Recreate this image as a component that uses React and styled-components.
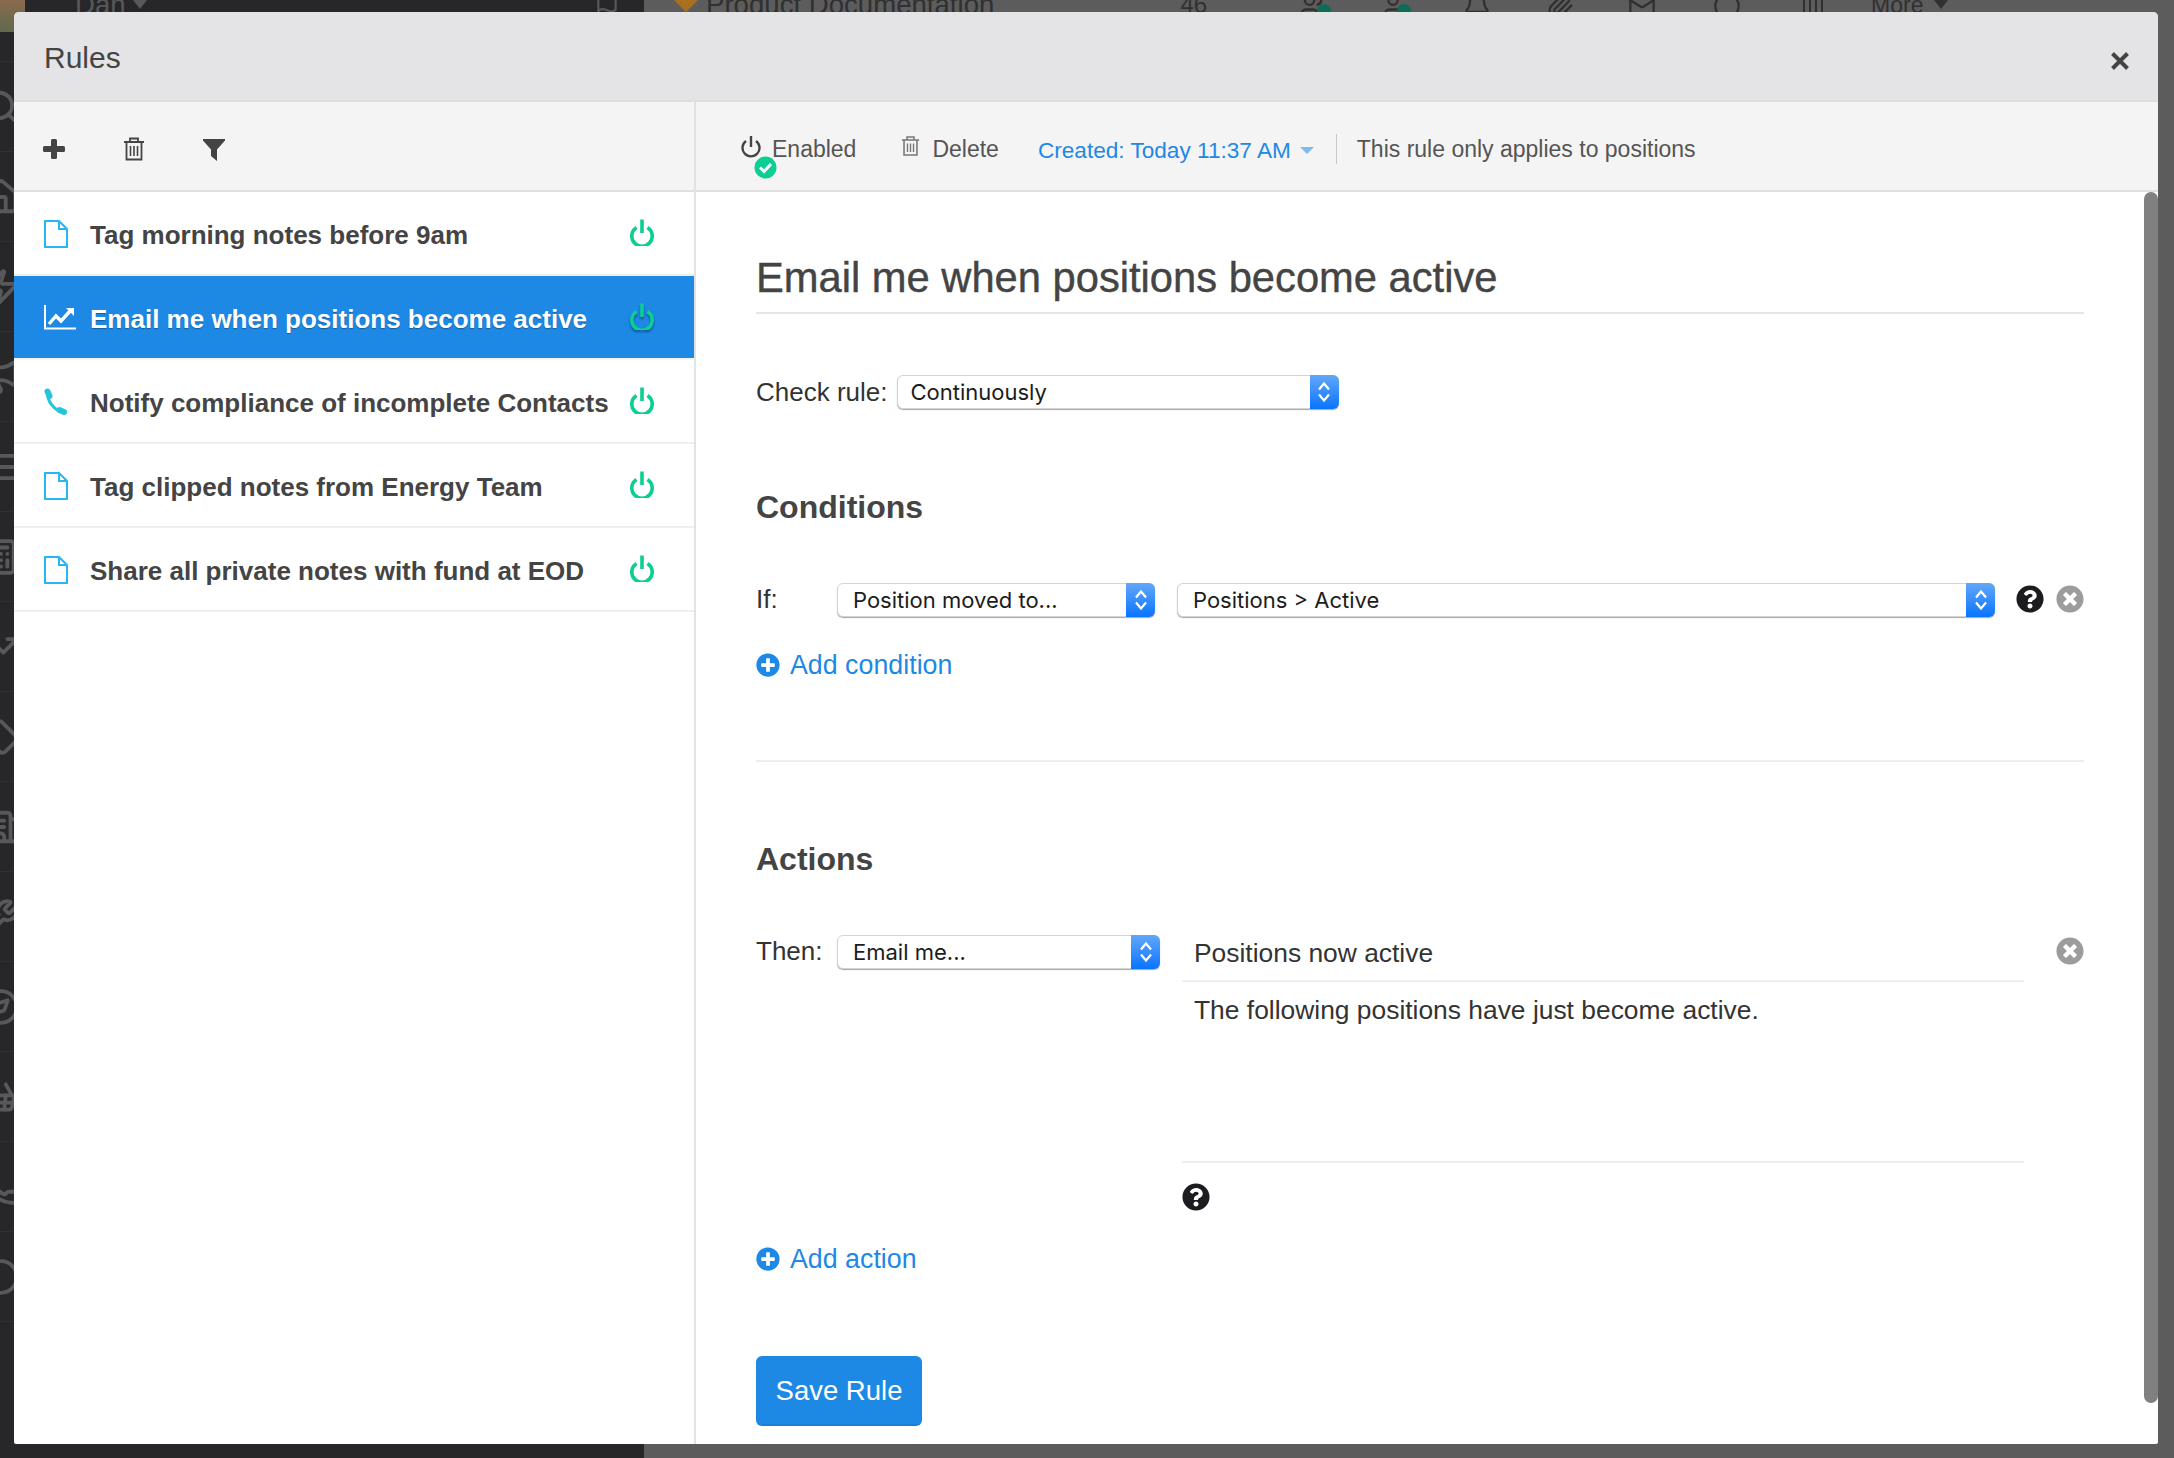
import React from 'react';
import styled, { createGlobalStyle } from 'styled-components';
import { FaQuestionCircle, FaTimesCircle, FaPlusCircle } from 'react-icons/fa';
import {
    Search, Home, Zap, Megaphone, List, Calculator, TrendingUp, Tag, Building2, Wrench,
    Compass, ShoppingBasket, Phone, Circle, Flag, Users, User, Bell, Paperclip, Mail,
    MessageCircle, Columns3,
} from 'lucide-react';

const BLUE = '#1e88e5';
const GREEN = '#0bcf92';
const SANS = '"Liberation Sans", Arial, sans-serif';

const GlobalStyle = createGlobalStyle`
    html, body {
        margin: 0;
        padding: 0;
        overflow: hidden;
        background: #5c5c5c;
    }
`;

const Page = styled.div`
    position: relative;
    display: flex;
    width: 2174px;
    height: 1458px;
    overflow: hidden;
    font-family: ${SANS};
`;

/* what shows around the dialog */
const Rail = styled.div`
    width: 644px;
    flex-shrink: 0;
    background: #27272a;
    color: #58585b;
`;

const RailHead = styled.div`
    height: 61px;
    border-bottom: 1px solid #303033;
`;

const Backdrop = styled.div`
    flex: 1;
    background: #5c5c5c;
    color: #303030;
`;

const TopBar = styled.div`
    display: flex;
    align-items: flex-end;
    height: 20px;
    padding-bottom: ${p => p.$pad || 0}px;
    overflow: hidden;
    font-size: 27.6px;
    line-height: 30px;
    white-space: nowrap;
`;

const Avatar = styled.div`
    width: 25px;
    height: 32px;
    flex-shrink: 0;
    align-self: flex-start;
    background: linear-gradient(#8b6a4f, #5f6a4c);
`;

const BarItem = styled.span`
    position: relative;
    display: inline-flex;
    align-items: flex-end;
    flex-shrink: 0;
    margin-left: ${p => p.$gap || 0}px;
    font-size: ${p => p.$size ? `${p.$size}px` : 'inherit'};
`;

const StatusDot = styled.span`
    position: absolute;
    right: -4px;
    bottom: 2px;
    width: 14px;
    height: 14px;
    border-radius: 50%;
    background: #0e6b55;
`;

const BarCaret = styled.span`
    flex-shrink: 0;
    align-self: flex-start;
    margin-left: ${p => p.$gap || 0}px;
    border-left: 7px solid transparent;
    border-right: 7px solid transparent;
    border-top: 9px solid currentColor;
`;

const Gem = styled.span`
    flex-shrink: 0;
    align-self: flex-start;
    width: 24px;
    height: 12px;
    margin-left: 30px;
    background: #a8701f;
    clip-path: polygon(0 0, 100% 0, 50% 100%);
`;

const RailItem = styled.div`
    display: flex;
    align-items: center;
    justify-content: flex-start;
    height: 89px;
    width: 644px;
    border-bottom: 1px solid #303033;
    overflow: hidden;

    & > svg {
        margin-left: -18px;
        flex-shrink: 0;
    }
`;

/* dialog */
const Modal = styled.div`
    position: absolute;
    top: 12px;
    left: 14px;
    width: 2144px;
    height: 1432px;
    display: flex;
    flex-direction: column;
    background: #fff;
    border-radius: 5px 5px 2px 2px;
    overflow: hidden;
    color: #333;
`;

const ModalHeader = styled.div`
    display: flex;
    align-items: center;
    justify-content: space-between;
    height: 88px;
    flex-shrink: 0;
    padding: 0 29px 0 30px;
    background: #e4e4e6;
    border-bottom: 2px solid #dedee0;
`;

const ModalTitle = styled.div`
    font-size: 30px;
    color: #444;
    margin-top: 4px;
`;

const CloseIcon = styled.svg`
    width: 18px;
    height: 18px;
    margin-top: 10px;
`;

const ModalBody = styled.div`
    flex: 1;
    display: flex;
    min-height: 0;
`;

const ListPane = styled.div`
    width: 680px;
    flex-shrink: 0;
    border-right: 2px solid #e2e2e2;
    box-sizing: content-box;
`;

const RulePane = styled.div`
    position: relative;
    flex: 1;
    min-width: 0;
`;

const Toolbar = styled.div`
    display: flex;
    align-items: center;
    height: 82px;
    padding-top: 6px;
    background: #f4f4f4;
    border-bottom: 2px solid #e0e0e0;
`;

const ListToolbar = styled(Toolbar)`
    padding-left: 29px;
    gap: 58px;
`;

const RuleToolbar = styled(Toolbar)`
    padding-left: 45px;
    font-size: 23px;
    color: #555;
`;

const ToolIcon = styled.svg`
    width: 22px;
    height: 24px;
    color: #444;
`;

const ToolAction = styled.div`
    position: relative;
    display: flex;
    align-items: center;
    margin-right: ${p => p.$gap}px;
    gap: ${p => p.$iconGap}px;

    & > svg {
        margin-top: -6px;
    }
`;

const CheckBadge = styled.svg`
    position: absolute;
    left: 13px;
    top: 26px;
    width: 23px;
    height: 23px;
`;

const CreatedMenu = styled.div`
    display: flex;
    align-items: center;
    gap: 9px;
    padding-top: 4px;
    font-size: 22.6px;
    color: ${BLUE};
`;

const Caret = styled.span`
    border-left: 7px solid transparent;
    border-right: 7px solid transparent;
    border-top: 7px solid #7dbaf0;
    margin-top: -2px;
`;

const ToolDivider = styled.div`
    width: 1px;
    height: 30px;
    margin: 0 20px 0 22px;
    background: #c8c8c8;
`;

const RuleRow = styled.div`
    display: flex;
    align-items: center;
    height: 78px;
    padding: 4px 40px 0 30px;
    border-bottom: 2px solid ${p => p.$active ? '#f4f4f4' : '#eeeeee'};
    background: ${p => p.$active ? BLUE : '#fff'};
    color: ${p => p.$active ? '#fff' : '#444'};
    font-size: 26px;
    font-weight: bold;
    white-space: nowrap;
    text-shadow: ${p => p.$active ? '0 1px 1px rgba(0,0,0,.3)' : 'none'};
`;

const RuleIconBox = styled.div`
    width: 46px;
    flex-shrink: 0;
    display: flex;
    align-items: center;
    margin-top: -3px;
`;

const RuleName = styled.div`
    flex: 1;
`;

const PowerIcon = styled.svg`
    width: 24px;
    height: 27px;
    flex-shrink: 0;
    margin-top: -6px;
    filter: ${p => p.$active ? 'drop-shadow(0 2px 1px rgba(0,40,90,.55))' : 'none'};
`;

const Editor = styled.div`
    padding: 0 74px 0 60px;
`;

const RuleTitle = styled.h1`
    margin: 62px 0 0;
    padding-bottom: 10px;
    font-size: 41.7px;
    line-height: 48px;
    font-weight: normal;
    color: #444;
    border-bottom: 2px solid #e5e5e5;
    -webkit-text-stroke: 0.4px #444;
`;

const CheckRow = styled.div`
    display: flex;
    align-items: center;
    gap: 9px;
    margin-top: 61px;
`;

const FieldLabel = styled.div`
    font-size: 26px;
    color: #333;
    white-space: nowrap;
    width: ${p => p.$width ? `${p.$width}px` : 'auto'};
    flex-shrink: 0;
    padding-bottom: ${p => p.$lift || 0}px;
`;

const SectionTitle = styled.h2`
    margin: ${p => p.$top}px 0 0;
    font-size: 32px;
    line-height: 40px;
    color: #444;
`;

const SelectBox = styled.div`
    position: relative;
    display: flex;
    align-items: center;
    box-sizing: border-box;
    width: ${p => p.$width}px;
    height: 34px;
    flex-shrink: 0;
    padding-left: ${p => p.$pad}px;
    background: #fff;
    border: 1px solid #d4d4d4;
    border-radius: 6px;
    box-shadow: 0 1px 1px rgba(0, 0, 0, .35);
    font-family: Inter, ${SANS};
    font-size: 22px;
    color: #1c1c1c;
`;

const SelectArrows = styled.div`
    position: absolute;
    top: -1px;
    right: -1px;
    bottom: -1px;
    width: 29px;
    display: flex;
    align-items: center;
    justify-content: center;
    background: linear-gradient(#62a8f8, #0a74ff);
    border-radius: 0 6px 6px 0;
`;

const FormRow = styled.div`
    display: flex;
    align-items: center;
    margin-top: 56px;
    height: 34px;
`;

const HelpIcon = styled(FaQuestionCircle)`
    width: 28px;
    height: 28px;
    color: #1c1c20;
    flex-shrink: 0;
`;

const RemoveIcon = styled(FaTimesCircle)`
    width: 28px;
    height: 28px;
    color: #9c9c9c;
    flex-shrink: 0;
`;

const RowIcons = styled.div`
    display: flex;
    gap: 12px;
    margin: -3px 0 0 21px;
`;

const AddLink = styled.div`
    display: flex;
    align-items: center;
    gap: 10px;
    height: 24px;
    margin-top: 36px;
    color: ${BLUE};
    font-size: 26.8px;

    & > svg {
        width: 24px;
        height: 24px;
    }
`;

const SectionRule = styled.div`
    height: 2px;
    margin-top: 83px;
    background: #eeeeee;
`;

const ActionRow = styled.div`
    display: flex;
    align-items: flex-start;
    margin-top: 56px;
`;

const ActionLabel = styled(FieldLabel)`
    line-height: 32px;
`;

const ActionBody = styled.div`
    width: 842px;
    margin-left: 22px;
    flex-shrink: 0;
`;

const ActionRemove = styled(RemoveIcon)`
    margin-left: 32px;
    margin-top: 2px;
`;

const SubjectField = styled.div`
    height: 45px;
    padding-left: 12px;
    border-bottom: 2px solid #eeeeee;
    font-size: 26.4px;
    line-height: 36px;
`;

const MessageField = styled.div`
    height: 167px;
    padding: 12px 0 0 12px;
    border-bottom: 2px solid #eeeeee;
    font-size: 26.4px;
    line-height: 32px;
`;

const BodyHelp = styled(HelpIcon)`
    display: block;
    margin-top: 20px;
`;

const SaveButton = styled.button`
    display: block;
    width: 166px;
    height: 70px;
    margin-top: 85px;
    padding: 2px 0 0;
    background: ${BLUE};
    border: 0;
    border-bottom: 2px solid #1b7fd6;
    border-radius: 6px;
    color: #fff;
    font-family: ${SANS};
    font-size: 27.5px;
`;

const ScrollThumb = styled.div`
    position: absolute;
    top: 90px;
    right: 0;
    width: 14px;
    height: 1211px;
    background: #808080;
    border-radius: 7px;
`;

const SelectGap = styled.div`
    width: 22px;
    flex-shrink: 0;
`;

const RULES = [
    { name: 'Tag morning notes before 9am', icon: 'doc' },
    { name: 'Email me when positions become active', icon: 'chart', active: true },
    { name: 'Notify compliance of incomplete Contacts', icon: 'phone' },
    { name: 'Tag clipped notes from Energy Team', icon: 'doc' },
    { name: 'Share all private notes with fund at EOD', icon: 'doc' },
];

const RAIL_ICONS = [Search, Home, Zap, Megaphone, List, Calculator, TrendingUp, Tag, Building2, Wrench, Compass, ShoppingBasket, Phone, Circle];

const DocIcon = () => (
    <svg width="24" height="28" viewBox="0 0 24 28" fill="none" stroke="#29b6f6" strokeWidth="2">
        <path d="M1 1H15L23 9V27H1Z" />
        <path d="M15 1V9H23" />
    </svg>
);

const ChartIcon = () => (
    <svg width="32" height="25" viewBox="0 0 32 25" fill="none" stroke="#fff">
        <path d="M1 0V23.5H32" strokeWidth="2" />
        <path d="M5 19L12 11L17 16L27 5" strokeWidth="3.4" />
        <path d="M22 3H30V11Z" fill="#fff" stroke="none" />
    </svg>
);

const PhoneIcon = () => (
    <svg width="24" height="28" viewBox="0 0 24 28" fill="none" stroke="#26c6da" strokeLinecap="round">
        <path d="M3.5 4C3 13 10 23 20 24" strokeWidth="3" />
        <path d="M3.5 3.5L5.5 8" strokeWidth="6" />
        <path d="M15.5 22L20 24" strokeWidth="6" />
    </svg>
);

const ROW_ICONS = { doc: DocIcon, chart: ChartIcon, phone: PhoneIcon };

const Power = ({ active }) => (
    <PowerIcon $active={active} viewBox="0 0 24 27" fill="none" stroke={GREEN} strokeWidth="3.6">
        <path d="M6.5 8.5A10.2 10.2 0 1 0 17.5 8.5" />
        <path d="M12 0.5V14" />
    </PowerIcon>
);

const TrashIcon = ({ width, height, color }) => (
    <svg width={width} height={height} viewBox="0 0 22 24" fill="none" stroke={color} strokeWidth="1.8">
        <path d="M1 5H21" />
        <path d="M7 5V1.5H15V5" />
        <path d="M3.5 5V22.5H18.5V5" />
        <path d="M7.5 9V19M11 9V19M14.5 9V19" strokeWidth="1.6" />
    </svg>
);

const Chevrons = () => (
    <svg width="14" height="24" viewBox="0 0 14 24" fill="none" stroke="#fff" strokeWidth="2.2">
        <path d="M2 9.500L7 3.500L12 9.500" />
        <path d="M2 14.500L7 20.500L12 14.500" />
    </svg>
);

const Select = ({ width, pad = 10, children }) => (
    <SelectBox $width={width} $pad={pad}>
        {children}
        <SelectArrows><Chevrons /></SelectArrows>
    </SelectBox>
);

const App = () => {
    return (
        <Page>
            <GlobalStyle />

            <Rail>
                <RailHead>
                    <TopBar $pad={12}>
                        <Avatar />
                        <BarItem $gap={50}>Dan</BarItem>
                        <BarCaret $gap={7} />
                        <BarItem $gap={447}><Flag size={26} /></BarItem>
                    </TopBar>
                </RailHead>
                {RAIL_ICONS.map((Icon, i) => (
                    <RailItem key={i}>
                        <Icon size={38} strokeWidth={2.4} />
                    </RailItem>
                ))}
            </Rail>

            <Backdrop>
                <TopBar>
                    <Gem />
                    <BarItem $gap={8}>Product Documentation</BarItem>
                    <BarItem $gap={186} $size={24}>46</BarItem>
                    <BarItem $gap={92}><Users size={28} /><StatusDot /></BarItem>
                    <BarItem $gap={52}><User size={28} /><StatusDot /></BarItem>
                    <BarItem $gap={56}><Bell size={28} /></BarItem>
                    <BarItem $gap={55}><Paperclip size={28} /></BarItem>
                    <BarItem $gap={54}><Mail size={28} /></BarItem>
                    <BarItem $gap={57}><MessageCircle size={28} /></BarItem>
                    <BarItem $gap={60}><Columns3 size={24} /></BarItem>
                    <BarItem $gap={46} $size={23}>More</BarItem>
                    <BarCaret $gap={11} />
                </TopBar>
            </Backdrop>

            <Modal>
                <ModalHeader>
                    <ModalTitle>Rules</ModalTitle>
                    <CloseIcon viewBox="0 0 18 18" stroke="#444" strokeWidth="4">
                        <path d="M1.5 1.5L16.5 16.5M16.5 1.5L1.5 16.5" />
                    </CloseIcon>
                </ModalHeader>

                <ModalBody>
                    <ListPane>
                        <ListToolbar>
                            <ToolIcon viewBox="0 0 22 24" fill="currentColor">
                                <path d="M8 3.500a1.500 1.500 0 0 1 1.500-1.500h3A1.500 1.500 0 0 1 14 3.500V9h6.500a1.500 1.500 0 0 1 1.500 1.500v3a1.500 1.500 0 0 1-1.500 1.500H14v5.500a1.500 1.500 0 0 1-1.500 1.500h-3A1.500 1.500 0 0 1 8 20.500V15H1.500A1.500 1.500 0 0 1 0 13.500v-3A1.500 1.500 0 0 1 1.500 9H8Z" />
                            </ToolIcon>
                            <TrashIcon width={22} height={24} color="#444" />
                            <ToolIcon viewBox="0 0 22 24" fill="currentColor">
                                <path d="M0 2H22V3.500L14 12.500V24L8 19V12.500L0 3.500Z" />
                            </ToolIcon>
                        </ListToolbar>

                        {RULES.map(rule => {
                            const Icon = ROW_ICONS[rule.icon];
                            return (
                                <RuleRow key={rule.name} $active={rule.active}>
                                    <RuleIconBox><Icon /></RuleIconBox>
                                    <RuleName>{rule.name}</RuleName>
                                    <Power active={rule.active} />
                                </RuleRow>
                            );
                        })}
                    </ListPane>

                    <RulePane>
                        <RuleToolbar>
                            <ToolAction $gap={45} $iconGap={11}>
                                <svg width="20" height="23" viewBox="0 0 20 23" fill="none" stroke="#444" strokeWidth="2.4">
                                    <path d="M5 6A8.500 8.500 0 1 0 15 6" />
                                    <path d="M10 1V12" />
                                </svg>
                                Enabled
                                <CheckBadge viewBox="0 0 23 23">
                                    <circle cx="11.500" cy="11.500" r="11" fill={GREEN} />
                                    <path d="M6 11.500L10 15.500L17 8" fill="none" stroke="#fff" strokeWidth="3" />
                                </CheckBadge>
                            </ToolAction>
                            <ToolAction $gap={39} $iconGap={12}>
                                <TrashIcon width={19} height={22} color="#777" />
                                Delete
                            </ToolAction>
                            <CreatedMenu>
                                Created: Today 11:37 AM
                                <Caret />
                            </CreatedMenu>
                            <ToolDivider />
                            This rule only applies to positions
                        </RuleToolbar>

                        <Editor>
                            <RuleTitle>Email me when positions become active</RuleTitle>

                            <CheckRow>
                                <FieldLabel>Check rule:</FieldLabel>
                                <Select width={442} pad={13}>Continuously</Select>
                            </CheckRow>

                            <SectionTitle $top={78}>Conditions</SectionTitle>

                            <FormRow>
                                <FieldLabel $width={81} $lift={2}>If:</FieldLabel>
                                <Select width={318} pad={15}>Position moved to...</Select>
                                <SelectGap />
                                <Select width={818} pad={15}>Positions &gt; Active</Select>
                                <RowIcons>
                                    <HelpIcon />
                                    <RemoveIcon />
                                </RowIcons>
                            </FormRow>

                            <AddLink>
                                <FaPlusCircle />
                                Add condition
                            </AddLink>

                            <SectionRule />

                            <SectionTitle $top={77}>Actions</SectionTitle>

                            <ActionRow>
                                <ActionLabel $width={81}>Then:</ActionLabel>
                                <Select width={323} pad={15}>Email me...</Select>
                                <ActionBody>
                                    <SubjectField>Positions now active</SubjectField>
                                    <MessageField>The following positions have just become active.</MessageField>
                                    <BodyHelp />
                                </ActionBody>
                                <ActionRemove />
                            </ActionRow>

                            <AddLink>
                                <FaPlusCircle />
                                Add action
                            </AddLink>

                            <SaveButton>Save Rule</SaveButton>
                        </Editor>

                        <ScrollThumb />
                    </RulePane>
                </ModalBody>
            </Modal>
        </Page>
    );
};

export default App;
